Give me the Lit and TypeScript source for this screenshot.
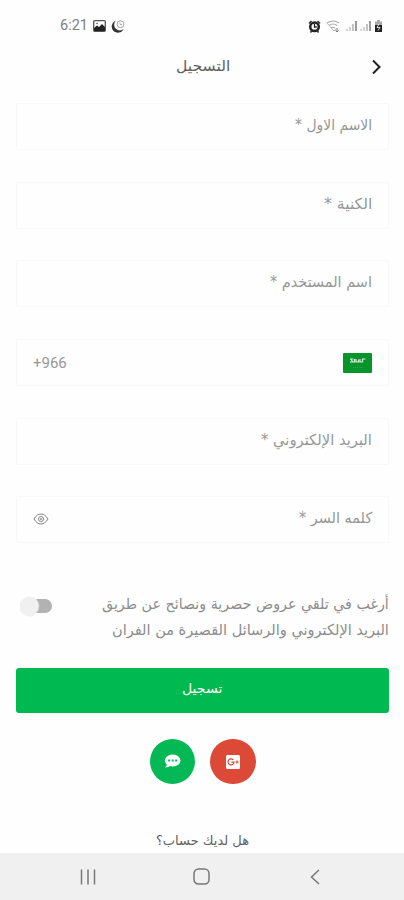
import { LitElement, html, svg, css } from "lit";
import { customElement, property } from "lit/decorators.js";
import { styleMap } from "lit/directives/style-map.js";

/** One line of text, condensed or widened to take exactly `span` pixels. */
@customElement("fit-text")
class FitText extends LitElement {
  @property({ type: Number }) span = 0;
  @property() text = "";
  @property({ type: Number }) scale = 1;
  static styles = css`
    :host { display: block; flex: none; direction: rtl; white-space: nowrap; }
    .line { display: inline-block; transform-origin: right center; }
  `;
  updated() {
    const el = this.renderRoot.querySelector(".line") as HTMLElement;
    const w = el.offsetWidth;
    if (w && this.span) this.scale = this.span / w;
  }
  render() {
    return html`<div style=${styleMap({ width: this.span + "px" })}><span class="line"
      style=${styleMap({ transform: `scaleX(${this.scale})` })}>${this.text}</span></div>`;
  }
}

@customElement("form-field")
class FormField extends LitElement {
  @property() label = "";
  @property({ type: Number }) span = 0;
  @property() kind = "";
  static styles = css`
    :host { display: flex; box-sizing: border-box; height: 47px; direction: rtl; align-items: center;
      justify-content: space-between; padding: 0 16px; border: 1px solid #f8f8f8; border-radius: 2px;
      color: #979797; font: 15px/20px "DejaVu Sans", sans-serif; }
    fit-text { margin-top: -3px; }
    .code { direction: ltr; font: 15px/20px Roboto, sans-serif; color: #999; }
    svg { display: block; }
    .eye { margin-top: -1px; }
  `;
  render() {
    if (this.kind === "phone") return html`
      <svg width="29" height="20" viewBox="0 0 29 20">
        <rect width="29" height="20" rx="1" fill="#07942a"/>
        <path d="M7 6h3.500M8 6.500l2 2.500H7M11.500 6v3.500M13 6v3h2.500V6.500M17 6v3.500M17 9h2.500V6.500M19 6h3.500" fill="none" stroke="#d5eedb" stroke-width="1.200"/>
        <path d="M10 14.500h10M19 13.500v1.600" stroke="#1f9f40" stroke-width=".8"/>
      </svg>
      <span class="code">+966</span>`;
    return html`
      <fit-text .span=${this.span} .text=${this.label}></fit-text>
      ${this.kind === "password" ? html`<svg class="eye" width="16" height="12" viewBox="0 0 16 12"
        fill="none" stroke="#858585"><path d="M1 6C3 2.600 5.300 1 8 1s5 1.600 7 5c-2 3.400-4.300 5-7 5S3 9.400 1 6z"/>
        <circle cx="8" cy="6" r="2.500"/><circle cx="8" cy="6" r=".6"/></svg>` : ""}`;
  }
}

const signal = svg`<path d="M1 11V9M4 11V7" stroke="#aaa"/><path d="M7 11V4" stroke="#888"/><path d="M10 11V1" stroke="#666" stroke-width="1.300"/>`;

@customElement("app-root")
class AppRoot extends LitElement {
  static styles = css`
    :host { display: flex; flex-direction: column; box-sizing: border-box; width: 404px; height: 900px;
      overflow: hidden; background: #fefefe; font-family: "DejaVu Sans", sans-serif; }
    svg { display: block; flex: none; }
    .status { display: flex; justify-content: space-between; align-items: center; height: 18px;
      margin-top: 17px; padding: 0 21px 0 60px; color: #808080; font: 14.500px/18px Roboto, sans-serif; }
    .group { display: flex; align-items: center; gap: 5px; }
    .right { gap: 3px; }
    .wifi { margin: 0 2px; }
    .head { display: grid; grid-template-columns: 1fr auto 1fr; align-items: center; height: 36px;
      margin-top: 13px; padding: 0 22px 0 24px; color: #606060; font-size: 15px; line-height: 20px; }
    .head svg { justify-self: end; margin-top: 1px; }
    .fields { display: grid; gap: 31.700px; margin: 19px 15px 0 16px; }
    .consent { display: flex; justify-content: space-between; margin: 49px 15px 0 20px; color: #8c8c8c; }
    .copy { display: flex; flex-direction: column; align-items: flex-end; font-size: 15px; line-height: 25.500px; }
    .switch { margin-top: 2px; }
    .submit { display: flex; justify-content: center; align-items: center; box-sizing: border-box; height: 45px;
      margin: 24.500px 15px 0 16px; padding-bottom: 2px; border-radius: 3px; background: #00b950; color: #fff;
      font-size: 13px; line-height: 20px; }
    .social { display: flex; justify-content: center; gap: 15px; margin-top: 26px; padding-left: 1px; }
    .round { display: grid; place-items: center; width: 45.500px; height: 45.500px; border-radius: 50%; }
    .chat { background: #04b955; }
    .google { background: #dc4937; }
    .login { display: flex; justify-content: center; margin-top: 47px; padding-left: 1px; color: #606060; font-size: 13px; line-height: 20px; }
    .nav { display: grid; grid-template-columns: repeat(3, 113.500px); justify-content: center; justify-items: center;
      align-items: center; height: 47px; margin-top: auto; padding-right: 2px; background: #f0f0f0; }
  `;
  render() {
    return html`
      <div class="status">
        <div class="group">
          <span>6:21</span>
          <svg width="13" height="12" viewBox="0 0 13 12"><rect x=".7" y=".7" width="11.600" height="10.600" rx="1" fill="#fff" stroke="#555" stroke-width="1.300"/><path d="M1 10V8l3-2.500 2 1.500 3-3 3 3v4H1z" fill="#222"/><circle cx="4" cy="3.500" r=".8" fill="#555"/></svg>
          <svg width="14" height="13" viewBox="0 0 14 13"><path d="M5 .6A6.200 6.200 0 1 0 12.600 9 5.200 5.200 0 0 1 5 .6z" fill="#333"/><circle cx="9.500" cy="4.200" r="3.400" fill="none" stroke="#999" stroke-width=".9"/><path d="M9 2.500v2h2" fill="none" stroke="#999" stroke-width=".8"/></svg>
        </div>
        <div class="group right">
          <svg width="13" height="13" viewBox="0 0 13 13"><circle cx="6.500" cy="6.800" r="4.300" fill="#fff" stroke="#222" stroke-width="2.500"/><path d="M1 3.500L3.500 1M12 3.500L9.500 1M2.500 12.500l1.500-2M10.500 12.500l-1.500-2" stroke="#333" stroke-width="1.700"/><path d="M6.500 4v3h2.300" fill="none" stroke="#222" stroke-width="1.300"/></svg>
          <svg class="wifi" width="15" height="13" viewBox="0 0 15 13" fill="none" stroke="#aaa"><path d="M1 3q6-4 12 0M3 5.500q4-3 8 0M5 8q2-1.500 4 0" stroke-width="1.200"/><path d="M1 3l7 8 2-2" stroke="#bbb"/><path d="M11 8v4M9.500 10.500l1.500 1.500L12.500 10.500" stroke="#777"/></svg>
          <svg width="11" height="12" viewBox="0 0 11 12">${signal}</svg>
          <svg width="11" height="12" viewBox="0 0 11 12">${signal}</svg>
          <svg width="9" height="12" viewBox="0 0 9 12"><path d="M3 0h3v1.500h2V12H1V1.500h2z" fill="#aaa"/><path d="M1 5h7v7H1z" fill="#222"/><path d="M5 4L3 7.500h3L4 10.500" fill="none" stroke="#eee" stroke-width=".9"/></svg>
        </div>
      </div>
      <div class="head">
        <span></span>
        <fit-text .span=${54} .text=${"التسجيل"}></fit-text>
        <svg width="11" height="16" viewBox="0 0 11 16"><path d="M2 1.500L8.500 8 2 14.500" fill="none" stroke="#222" stroke-width="2"/></svg>
      </div>
      <div class="fields">
        <form-field .label=${"الاسم الاول *"} .span=${77}></form-field>
        <form-field .label=${"الكنية *"} .span=${48}></form-field>
        <form-field .label=${"اسم المستخدم *"} .span=${102}></form-field>
        <form-field kind="phone"></form-field>
        <form-field .label=${"البريد الإلكتروني *"} .span=${111}></form-field>
        <form-field kind="password" .label=${"كلمه السر *"} .span=${73}></form-field>
      </div>
      <div class="consent">
        <svg class="switch" width="34" height="24" viewBox="0 0 34 24"><rect x="6" y="5" width="26" height="14" rx="7" fill="#b2b2b2"/><circle cx="9.500" cy="12.500" r="10" fill="#ddd" opacity=".45"/><circle cx="9.500" cy="12" r="9.400" fill="#f0f0f0"/></svg>
        <div class="copy">
          <fit-text .span=${287} .text=${"أرغب في تلقي عروض حصرية ونصائح عن طريق"}></fit-text>
          <fit-text .span=${277} .text=${"البريد الإلكتروني والرسائل القصيرة من الفران"}></fit-text>
        </div>
      </div>
      <div class="submit"><fit-text .span=${40} .text=${"تسجيل"}></fit-text></div>
      <div class="social">
        <div class="round chat"><svg width="17" height="15" viewBox="0 0 17 15"><ellipse cx="8.700" cy="6.500" rx="7.800" ry="6" fill="#fff"/><path d="M3 9q0 3-2 4.500 4 0 6-2.500z" fill="#fff"/><path d="M4.200 6.500h2M7.700 6.500h2M11.200 6.500h2" stroke="#04b955" stroke-width="1.800"/></svg></div>
        <div class="round google"><svg width="14" height="14" viewBox="0 0 14 14"><rect width="14" height="14" rx="1.500" fill="#fff"/><path d="M7.400 5A3 3 0 1 0 8 7.200H5.300M9.500 7h3M11 5.500v3" fill="none" stroke="#dc4937" stroke-width="1.200"/></svg></div>
      </div>
      <div class="login"><fit-text .span=${93} .text=${"هل لديك حساب؟"}></fit-text></div>
      <div class="nav">
        <svg width="16" height="16" viewBox="0 0 16 16"><path d="M1.500 .5v15M8 .5v15M14.500 .5v15" stroke="#777" stroke-width="1.500"/></svg>
        <svg width="17" height="17" viewBox="0 0 17 17"><rect x="1" y="1" width="15" height="15" rx="4.500" fill="none" stroke="#777" stroke-width="1.500"/></svg>
        <svg width="10" height="16" viewBox="0 0 10 16"><path d="M9 1L1.500 8 9 15" fill="none" stroke="#777" stroke-width="1.500"/></svg>
      </div>`;
  }
}
